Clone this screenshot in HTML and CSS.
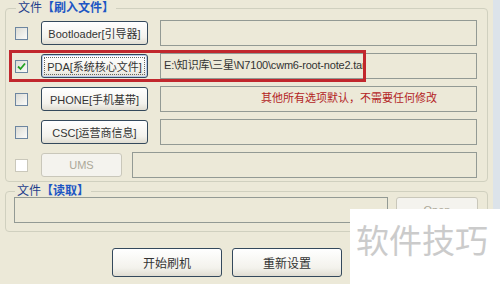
FILE: index.html
```html
<!DOCTYPE html>
<html lang="zh-CN">
<head>
    <meta charset="UTF-8">
    <meta name="viewport" content="width=device-width, initial-scale=1.0">
    <title>Odin 刷机</title>
    <link rel="stylesheet" href="styles.css">
</head>
<body>
    <div class="app">
        <fieldset class="group group-write">
            <legend><span>文件</span><b>【刷入文件】</b></legend>

            <div class="row">
                <span class="check"></span>
                <button class="btn file-btn">Bootloader[引导器]</button>
                <div class="field"></div>
            </div>

            <div class="row row-pda">
                <span class="check">
                    <svg width="9" height="9" viewBox="0 0 9 9"><path d="M1 4.5 L3.5 7 L8 1.5" fill="none" stroke="#21a121" stroke-width="1.8"/></svg>
                </span>
                <button class="btn file-btn focused">PDA[系统核心文件]</button>
                <div class="field path">E:\知识库\三星\N7100\cwm6-root-note2.tar</div>
                <!-- red mark drawn over the PDA row -->
                <div class="highlight"></div>
            </div>

            <div class="row">
                <span class="check"></span>
                <button class="btn file-btn">PHONE[手机基带]</button>
                <div class="field note">其他所有选项默认，不需要任何修改</div>
            </div>

            <div class="row">
                <span class="check"></span>
                <button class="btn file-btn">CSC[运营商信息]</button>
                <div class="field"></div>
            </div>

            <div class="row">
                <span class="check disabled"></span>
                <button class="btn ums" disabled>UMS</button>
                <div class="field"></div>
            </div>
        </fieldset>

        <fieldset class="group group-read">
            <legend><span>文件</span><b>【读取】</b></legend>
            <div class="row">
                <div class="field"></div>
                <button class="btn open" disabled>Open</button>
            </div>
        </fieldset>

        <div class="actions">
            <button class="btn big">开始刷机</button>
            <button class="btn big">重新设置</button>
        </div>

        <div class="watermark">软件技巧</div>
    </div>
</body>
</html>
```

FILE: styles.css
```css
* { box-sizing: border-box; }
body {
    margin: 0;
    background-color: #dce3ea;
    font-family: "Liberation Sans", "Noto Sans CJK SC", sans-serif;
    font-size: 12px;
    color: #222;
    overflow: hidden;
}
.app {
    position: relative;
    width: 493px;
    height: 284px;
    background-color: #ece9d8;
    padding-top: 2px;
}
.group {
    margin: 0 0 0 5px;
    width: 483px;
    border: 1px solid #d0d0bf;
    border-radius: 4px;
    min-width: 0;
}
.group legend {
    padding: 0 2px;
    margin-left: 1px;
    font-size: 12px;
    line-height: 12px;
    color: #1f3f8c;
}
.group legend b { color: #1d56c4; }
.group-write {
    padding: 6px 10px 3px 9px;
}
.group-read {
    margin-top: 3px;
    padding: 0 9px 8px 8px;
}
.row {
    display: flex;
    align-items: center;
    height: 26px;
    margin-bottom: 7px;
}
.row:last-child { margin-bottom: 0; }
.row-pda { position: relative; }

.check {
    flex: none;
    width: 13px;
    height: 13px;
    border: 1px solid #6d86a0;
    background: linear-gradient(135deg, #dcdcd5, #fbfbf9);
    margin-right: 13px;
    display: flex;
    align-items: center;
    justify-content: center;
}
.check.disabled {
    border-color: #cac8bb;
    background: #fff;
}

.btn {
    font-family: "Liberation Sans", "Noto Sans CJK SC", sans-serif;
    font-size: 11px;
    color: #333;
    height: 24px;
    border: 1px solid #34495c;
    border-radius: 3px;
    background: linear-gradient(#ffffff, #f3f2ec 70%, #e0ddd2);
    padding: 0;
    flex: none;
}
.file-btn { width: 107px; margin-right: 12px; }
.focused {
    box-shadow: inset 0 0 0 1px #b9cbec;
    outline: 1px dotted #666;
    outline-offset: -4px;
}
.btn:disabled {
    border-color: #c9c7ba;
    background: #f4f3ee;
    color: #aca899;
}
.ums { width: 81px; margin-right: 10px; }
.open { width: 82px; height: 26px; margin-left: 8px; }

.field {
    flex: 1;
    height: 26px;
    border: 1px solid #939a94;
    background-color: #ece9d8;
    padding: 0 3px;
    line-height: 22px;
    white-space: nowrap;
    overflow: hidden;
}
.path {
    font-size: 11px;
    letter-spacing: -0.2px;
    color: #333;
}
.note {
    padding-left: 100px;
    font-size: 11px;
    color: #b3231f;
}
.highlight {
    position: absolute;
    left: -6px;
    top: -3px;
    width: 357px;
    height: 32px;
    border: 3px solid #c1272d;
}

.actions {
    display: flex;
    gap: 10px;
    padding-left: 112px;
    margin-top: 16px;
}
.big {
    width: 110px;
    height: 29px;
    font-size: 12px;
}

.watermark {
    position: absolute;
    left: 350px;
    top: 209px;
    width: 150px;
    height: 75px;
    background-color: #fff;
    padding: 8px 0 0 6px;
    font-family: "Noto Sans CJK SC", sans-serif;
    font-size: 33px;
    line-height: 44px;
    color: #cbcbcb;
}
```
